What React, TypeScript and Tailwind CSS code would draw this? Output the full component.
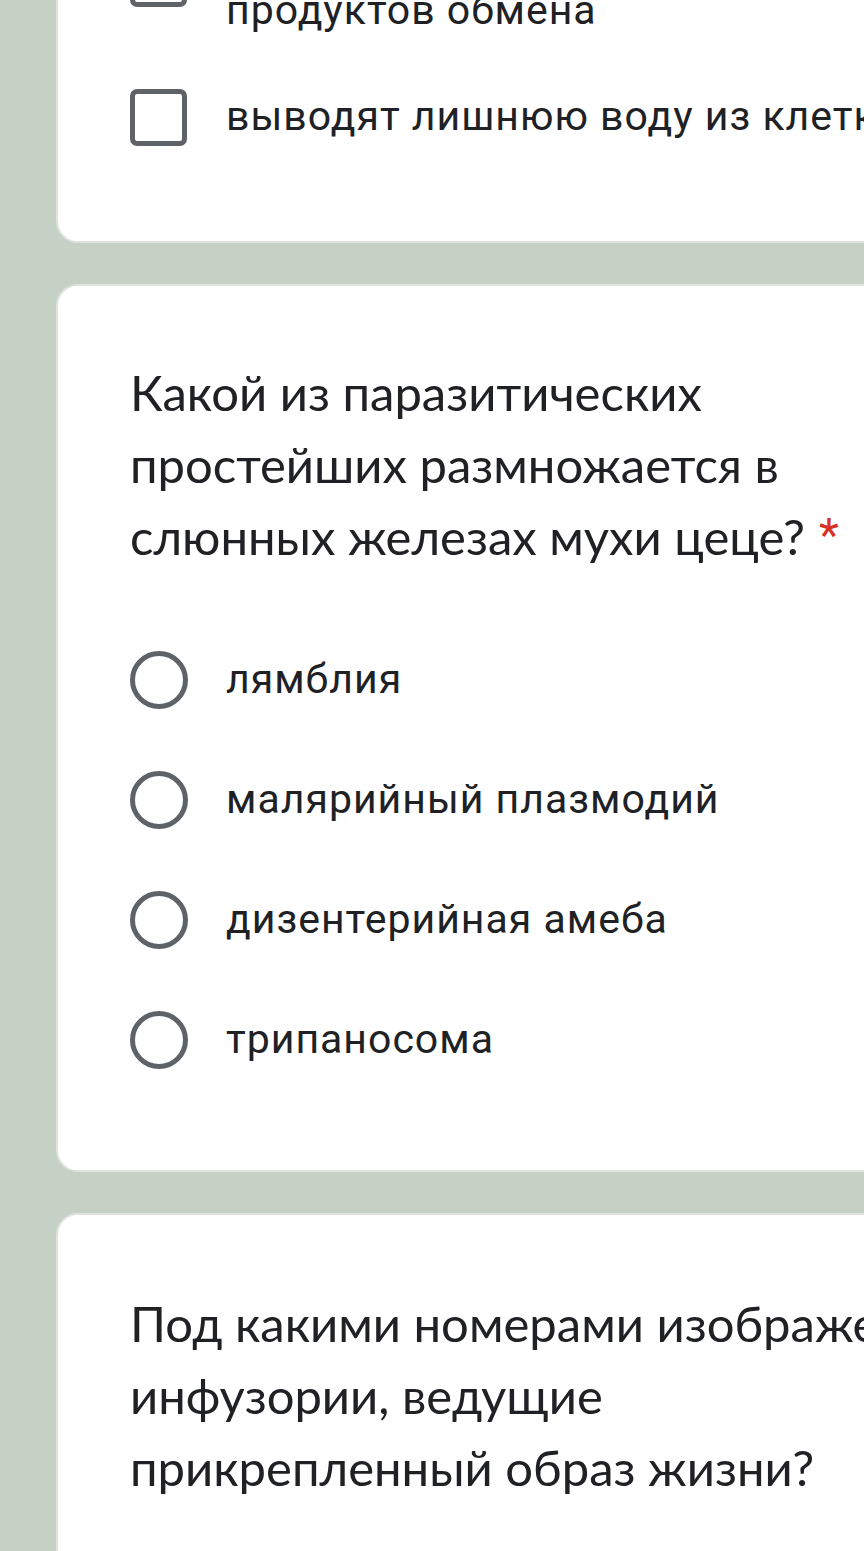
import React from "react";

const question = "font-['Lato','Open_Sans',sans-serif] text-[49px] leading-[72px] text-[#202124]";
const option = "font-['Roboto',sans-serif] text-[41px] tracking-[1px] text-[#202124]";

function Checkbox({ className = "" }: { className?: string }) {
  return <div className={"h-[57px] w-[57px] shrink-0 rounded-[7px] border-[5px] border-[#5f6368] " + className} />;
}

function Radio() {
  return <div className="h-[58px] w-[58px] shrink-0 rounded-full border-[5px] border-[#5f6368]" />;
}

const answers = ["лямблия", "малярийный плазмодий", "дизентерийная амеба", "трипаносома"];

export default function App() {
  return (
    <div className="h-[1551px] overflow-hidden bg-[#c5d1c4]">
      <div className="pl-[56px]">
        {/* previous question, cut off at the top */}
        <div className="-mt-[160px] w-[860px] rounded-[22px] border-2 border-[#dfe4de] bg-white pl-[72px] pt-[96px] pb-[64px]">
          <div className="flex items-start pb-[23px]">
            <Checkbox className="mt-[12px]" />
            <div className={option + " ml-[39px] leading-[48px] whitespace-nowrap"}>
              выделяют излишки воды и
              <br />
              продуктов обмена
            </div>
          </div>
          <div className="flex h-[120px] items-center">
            <Checkbox />
            <div className={option + " ml-[39px] whitespace-nowrap"}>выводят лишнюю воду из клетки</div>
          </div>
        </div>

        <div className="mt-[41px] w-[860px] rounded-[22px] border-2 border-[#dfe4de] bg-white pl-[72px] pt-[70px] pb-[70px]">
          <div className={question}>
            Какой из паразитических
            <br />
            простейших размножается в
            <br />
            слюнных железах мухи цеце?
            <span className="relative -top-[4px] ml-[14px] font-['Roboto',sans-serif] text-[46px] text-[#d93025]">*</span>
          </div>
          <div className="mt-[45px]">
            {answers.map((a) => (
              <div key={a} className="flex h-[120px] items-center">
                <Radio />
                <div className={option + " ml-[38px]"}>{a}</div>
              </div>
            ))}
          </div>
        </div>

        <div className="mt-[41px] h-[400px] w-[860px] rounded-[22px] border-2 border-[#dfe4de] bg-white pl-[72px] pt-[72px]">
          <div className={question + " whitespace-nowrap"}>
            Под какими номерами изображены
            <br />
            инфузории, ведущие
            <br />
            прикрепленный образ жизни?
          </div>
        </div>
      </div>
    </div>
  );
}
